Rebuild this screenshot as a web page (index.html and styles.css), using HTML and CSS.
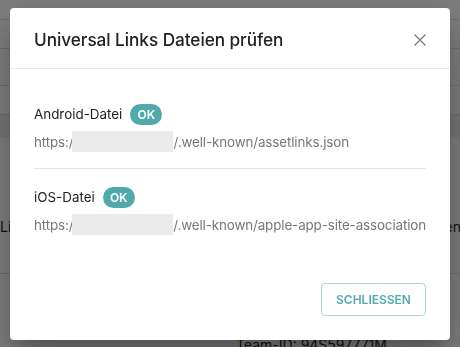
FILE: index.html
```html
<!DOCTYPE html>
<html lang="de">
<head>
<meta charset="utf-8">
<link rel="stylesheet" href="styles.css">
</head>
<body>
<div class="page">
  <div class="row r1"></div>
  <div class="row r2"></div>
  <div class="row r3"></div>
  <div class="row r4"></div>
  <div class="row band"></div>
  <div class="row r6"><span class="bg-left">Links</span><span class="bg-right">Dateien</span></div>
  <div class="row r7"><span class="team">Team-ID: 94S597771M</span></div>
</div>
<div class="overlay"></div>
<div class="modal" role="dialog">
  <header class="modal-head">
    <h1 class="title">Universal Links Dateien prüfen</h1>
    <button class="close" aria-label="Schließen">
      <svg width="12" height="12" viewBox="0 0 12 12"><path d="M0.5 0.5L11.5 11.5M11.5 0.5L0.5 11.5" stroke="#7a7a7a" stroke-width="1.3" fill="none"/></svg>
    </button>
  </header>
  <div class="modal-body">
    <section class="file">
      <div class="file-label">Android-Datei <span class="badge">OK</span></div>
      <div class="url">https:/<span class="mask"></span>/.well-known/assetlinks.json</div>
    </section>
    <section class="file second">
      <div class="file-label">iOS-Datei <span class="badge">OK</span></div>
      <div class="url">https:/<span class="mask"></span>/.well-known/apple-app-site-association</div>
    </section>
  </div>
  <footer class="modal-foot">
    <button class="btn">SCHLIESSEN</button>
  </footer>
</div>
</body>
</html>
```
FILE: styles.css
```css
* { box-sizing: border-box; }
html, body { margin: 0; padding: 0; }
body {
  width: 460px;
  height: 347px;
  overflow: hidden;
  font-family: Inter, "Liberation Sans", sans-serif;
  background: #fff;
  position: relative;
}
.page { display: flex; flex-direction: column; }
.row { border-bottom: 1px solid #dcdcdc; position: relative; }
.r1 { height: 20px; }
.r2 { height: 29px; }
.r3 { height: 37px; }
.r4 { height: 29px; }
.band { height: 23px; background: #eeeeee; border-bottom: none; }
.r6 { height: 136px; display: flex; justify-content: space-between; align-items: center; font-size: 14px; color: #222; padding-top: 42px; white-space: nowrap; }
.bg-left { margin-left: 0; }
.bg-right { margin-right: -1px; }
.r7 { height: 80px; border-bottom: none; }
.team { position: absolute; left: 236px; top: 62px; font-size: 14px; color: #222; white-space: nowrap; }

.overlay { position: fixed; inset: 0; background: rgba(0,0,0,0.5); }

.modal {
  position: absolute;
  left: 10px; top: 8px;
  width: 440px; height: 332px;
  background: #fff;
  border-radius: 4px;
  box-shadow: 0 11px 15px -7px rgba(0,0,0,.2), 0 24px 38px 3px rgba(0,0,0,.14), 0 9px 46px 8px rgba(0,0,0,.12);
  display: flex;
  flex-direction: column;
}
.modal-head {
  height: 61px;
  border-bottom: 1px solid #e9e9e9;
  display: flex;
  align-items: center;
  justify-content: space-between;
  padding: 2px 24px 0 24px;
}
.title {
  margin: 0;
  font-size: 17.2px;
  font-weight: 500;
  color: #222;
  letter-spacing: -0.05px;
  white-space: nowrap;
}
.close {
  border: 0; background: none; padding: 0; margin-top: 2px;
  display: flex;
}
.modal-body { padding: 34px 24px 0 24px; flex: 1; }
.file-label {
  display: flex; align-items: center; gap: 8px;
  font-size: 13.4px; color: #222; height: 22px; white-space: nowrap;
}
.badge {
  display: inline-flex; align-items: center; justify-content: center;
  width: 32px; height: 21px; border-radius: 11px;
  background: #50a9aa; color: #fff; font-size: 12px; font-weight: 600;
}
.url {
  margin-top: 6px;
  display: flex; align-items: center;
  font-size: 13.4px; color: #777; height: 21px; white-space: nowrap;
  letter-spacing: -0.12px;
}
.mask { width: 101px; height: 21px; background: #ebebeb; margin-left: -1px; }
.second { border-top: 1px solid #e5e5e5; margin-top: 16px; padding-top: 17px; }
.modal-foot { display: flex; justify-content: flex-end; padding: 0 24px 24px; }
.btn {
  width: 105px; height: 33px;
  border: 1px solid #a8d5d6; border-radius: 4px; background: #fff;
  color: #52aaad; font-family: inherit; font-size: 12px; font-weight: 600;
}
```
